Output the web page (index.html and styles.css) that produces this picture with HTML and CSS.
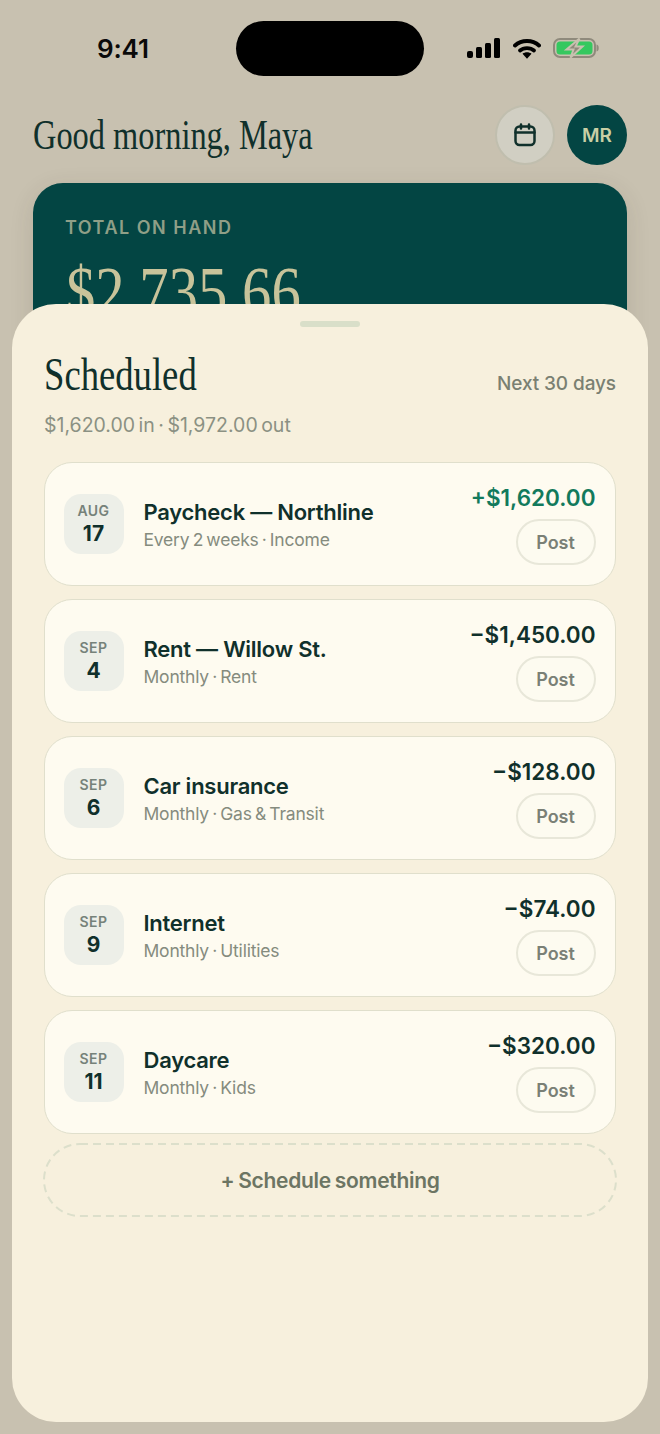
FILE: index.html
```html
<!DOCTYPE html>
<html lang="en">
<head>
<meta charset="utf-8">
<title>Scheduled</title>
<link rel="stylesheet" href="styles.css">
</head>
<body>
<div class="screen">
  <div class="status">
    <span class="time">9:41</span>
    <div class="island"></div>
    <div class="status-icons">
      <svg class="sig" width="34" height="20" viewBox="0 0 34 20"><rect x="0" y="13" width="6" height="7" rx="2"/><rect x="9" y="9" width="6" height="11" rx="1.5"/><rect x="18" y="5" width="6" height="15" rx="1.5"/><rect x="27" y="0" width="6" height="20" rx="1.5"/></svg>
      <svg class="wifi" width="28" height="21" viewBox="0 0 28 21"><path d="M2 7.500C8.500 1.500 19.500 1.500 26 7.500" fill="none" stroke="#000" stroke-width="4" stroke-linecap="round"/><path d="M7 12.500C10.500 9.300 17.500 9.300 21 12.500" fill="none" stroke="#000" stroke-width="3.800" stroke-linecap="round"/><path d="M9.500 15.800C12 13.800 16 13.800 18.500 15.800L14 20.800Z"/></svg>
      <svg class="batt" width="46" height="22" viewBox="0 0 46 22"><rect x="1" y="2" width="41" height="18" rx="6" fill="none" stroke="#8f8a7c" stroke-width="2"/><rect x="3.500" y="4.500" width="36" height="13" rx="3.500" fill="#35c85f"/><path d="M43.500 7.500c1.800.5 2.200 1.500 2.200 3.500s-.4 3-2.200 3.500z" fill="#8f8a7c"/><path d="M26.500 1.500 13.500 12.500h7L17.500 20.500l12-11h-7z" fill="#8f8a7c" stroke="#c8c1b0" stroke-width="2"/></svg>
    </div>
  </div>

  <header class="top">
    <h1 class="greet"><span class="narrow">Good morning, Maya</span></h1>
    <div class="top-actions">
      <button class="circle cal" aria-label="Calendar">
        <svg width="24" height="24" viewBox="0 0 24 24" fill="none" stroke="#10302b" stroke-width="2.500" stroke-linecap="round" stroke-linejoin="round"><rect x="2.500" y="3.500" width="19" height="18.500" rx="4"/><path d="M2.500 9.500h19M8 1.500v4M16 1.500v4"/></svg>
      </button>
      <div class="circle avatar">MR</div>
    </div>
  </header>

  <section class="hero">
    <div class="hero-label">TOTAL ON HAND</div>
    <div class="hero-amount"><span class="narrow">$2,735.66</span></div>
  </section>

  <section class="sheet">
    <div class="handle"></div>
    <div class="sheet-head">
      <h2 class="sheet-title"><span class="narrow">Scheduled</span></h2>
      <span class="sheet-range">Next 30 days</span>
    </div>
    <p class="sheet-sub">$1,620.00 in · $1,972.00 out</p>

    <ul class="list">
      <li class="item">
        <div class="tile"><span class="mon">AUG</span><span class="day">17</span></div>
        <div class="info"><div class="name">Paycheck — Northline</div><div class="meta">Every 2 weeks · Income</div></div>
        <div class="side"><div class="amt in">+$1,620.00</div><button class="post">Post</button></div>
      </li>
      <li class="item">
        <div class="tile"><span class="mon">SEP</span><span class="day">4</span></div>
        <div class="info"><div class="name">Rent — Willow St.</div><div class="meta">Monthly · Rent</div></div>
        <div class="side"><div class="amt">−$1,450.00</div><button class="post">Post</button></div>
      </li>
      <li class="item">
        <div class="tile"><span class="mon">SEP</span><span class="day">6</span></div>
        <div class="info"><div class="name">Car insurance</div><div class="meta">Monthly · Gas &amp; Transit</div></div>
        <div class="side"><div class="amt">−$128.00</div><button class="post">Post</button></div>
      </li>
      <li class="item">
        <div class="tile"><span class="mon">SEP</span><span class="day">9</span></div>
        <div class="info"><div class="name">Internet</div><div class="meta">Monthly · Utilities</div></div>
        <div class="side"><div class="amt">−$74.00</div><button class="post">Post</button></div>
      </li>
      <li class="item">
        <div class="tile"><span class="mon">SEP</span><span class="day">11</span></div>
        <div class="info"><div class="name">Daycare</div><div class="meta">Monthly · Kids</div></div>
        <div class="side"><div class="amt">−$320.00</div><button class="post">Post</button></div>
      </li>
    </ul>
    <button class="add">
      <svg class="add-dash" width="574" height="74" viewBox="0 0 574 74" fill="none"><rect x="1" y="1" width="572" height="72" rx="36" stroke="#dcdfcb" stroke-width="2" stroke-dasharray="8 5"/></svg>
      + Schedule something
    </button>
  </section>
</div>
</body>
</html>
```
FILE: styles.css
```css
* { box-sizing: border-box; }
html, body { margin: 0; padding: 0; }
body { background: #c8c1b0; font-family: "Inter", "Liberation Sans", sans-serif; color: #10302b; }
button { font-family: inherit; cursor: pointer; }

.screen { position: relative; width: 660px; height: 1434px; overflow: hidden; background: #c8c1b0; padding: 21px 33px 0; }

.status { display: grid; grid-template-columns: 1fr 188px 1fr; align-items: center; height: 55px; }
.time { font-size: 26px; font-weight: 600; color: #0a0a0a; letter-spacing: -0.15px; padding-left: 64px; }
.island { height: 55px; border-radius: 28px; background: #000; }
.status-icons { display: flex; align-items: center; justify-content: flex-end; gap: 12px; padding-right: 28px; margin-top: -1px; }
.sig { fill: #000; }
.wifi { fill: #000; }

.top { display: flex; align-items: center; justify-content: space-between; margin-top: 29px; }
.greet { margin: 0; font: 400 43px/58px "Liberation Serif", serif; color: #10302b; }
.narrow { display: inline-block; white-space: nowrap; transform-origin: left center; }
.greet .narrow { transform: scaleX(0.753); }
.top-actions { display: flex; gap: 12px; }
.circle { width: 60px; height: 60px; border-radius: 50%; display: flex; align-items: center; justify-content: center; }
.cal { background: #d1cfc3; border: 2px solid #c0beae; padding: 0; }
.avatar { background: #034543; color: #c9cfa5; font-size: 19px; font-weight: 600; }

.hero { margin-top: 18px; height: 220px; border-radius: 30px; background: #034543; padding: 34px 33px; box-shadow: 0 6px 24px rgba(60,50,30,.12); }
.hero-label { font-size: 18px; font-weight: 600; line-height: 22px; letter-spacing: 1.5px; color: #8f9f87; margin-left: -1px; }
.hero-amount { margin-top: 13px; font: 400 72px/80px "Liberation Serif", serif; color: #c8c39a; }
.hero-amount .narrow { transform: scaleX(0.815); }

.sheet { position: absolute; left: 12px; top: 304px; width: 636px; height: 1118px; background: #f7f0dd; border-radius: 44px; padding: 17px 32px 0; }
.handle { width: 60px; height: 6px; border-radius: 3px; background: #d9dfc9; margin: 0 auto; }
.sheet-head { display: flex; align-items: center; justify-content: space-between; margin-top: 21px; height: 54px; }
.sheet-title { margin: 0; font: 400 46px/54px "Liberation Serif", serif; color: #10302b; }
.sheet-title .narrow { transform: scaleX(0.797); }
.sheet-range { font-size: 19px; font-weight: 500; color: #7a8072; margin-top: 16px; letter-spacing: -0.1px; }
.sheet-sub { margin: 9px 0 0; font-size: 19.5px; line-height: 28px; color: #8b9183; word-spacing: -2px; }

.list { list-style: none; margin: 23px 0 0; padding: 0; display: flex; flex-direction: column; gap: 13px; }
.item { height: 124px; display: flex; align-items: center; background: #fefbf0; border: 1.5px solid #e0dfcc; border-radius: 28px; padding: 0 19.5px 0 18.5px; }
.tile { width: 60px; height: 60px; border-radius: 17px; background: #edefe8; display: flex; flex-direction: column; align-items: center; justify-content: center; flex: none; }
.mon { font-size: 14px; font-weight: 600; line-height: 17px; letter-spacing: .5px; color: #76827a; }
.day { font-size: 21px; font-weight: 700; line-height: 26px; margin-top: 2px; color: #10302b; }
.info { margin-left: 20px; flex: 1; margin-top: 1px; }
.name { font-size: 22px; font-weight: 600; line-height: 29px; color: #10302b; letter-spacing: -0.25px; }
.meta { font-size: 17.5px; line-height: 25px; color: #858b7e; word-spacing: -1.5px; letter-spacing: -0.2px; }
.side { display: flex; flex-direction: column; align-items: flex-end; gap: 7px; margin-top: 1px; }
.amt { font-size: 22.5px; font-weight: 600; line-height: 28px; color: #10302b; }
.amt.in { color: #127a5c; }
.post { width: 80px; height: 46px; border-radius: 23px; background: #fdfbf0; border: 2px solid #e8e7d9; font-size: 18px; font-weight: 600; color: #7a8076; padding: 0; }

.add { position: relative; display: block; width: 574px; height: 74px; margin: 9px 0 0 -1px; background: transparent; border: 0; font-size: 21px; font-weight: 600; color: #6c7563; padding: 0; word-spacing: -1px; letter-spacing: -0.3px; }
.add-dash { position: absolute; left: 0; top: 0; }
```
